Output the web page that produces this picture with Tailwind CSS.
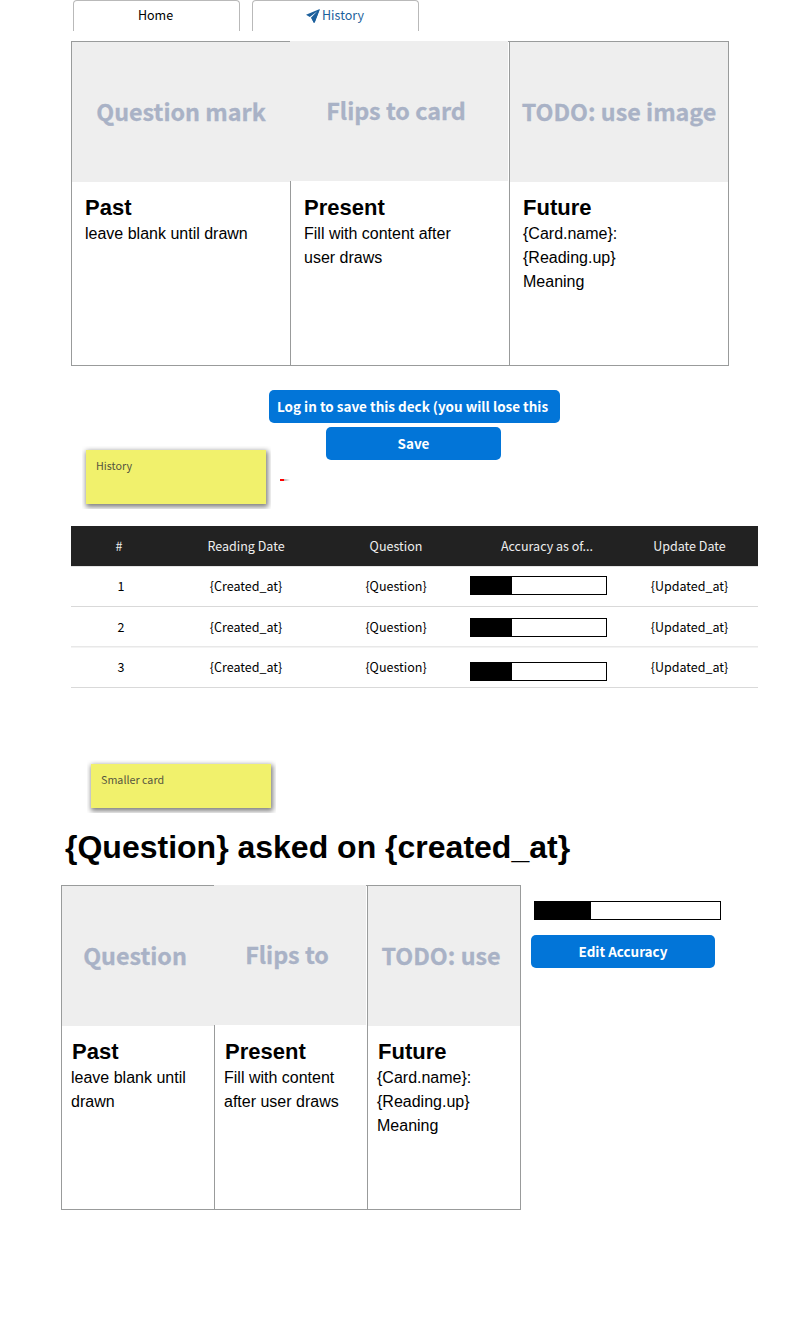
<!DOCTYPE html>
<html lang="en">
<head>
<meta charset="utf-8">
<title>Reading history</title>
<script src="https://cdn.jsdelivr.net/npm/@tailwindcss/browser@4"></script>
</head>
<body class="w-[809px] h-[1319px] overflow-hidden bg-white text-black font-['Noto_Sans_CJK_SC',sans-serif] whitespace-nowrap">
<main class="flex flex-col h-full">

  <!-- Tabs -->
  <nav class="flex gap-3 ml-[73px] h-[31px] text-[12.53px]">
    <div class="w-[167px] h-[31px] border border-b-0 border-[#b9b9b9] rounded-t-[4px] text-center"><div class="h-full -ml-[2px] leading-[28px]">Home</div></div>
    <div class="w-[167px] h-[31px] border border-b-0 border-[#b9b9b9] rounded-t-[4px] flex justify-center items-start gap-[2px] pr-px text-[#1c5f9c] leading-[28px]">
      <svg class="mt-2 w-[14px] h-[14px]" viewBox="0 0 14 14" fill="currentColor"><path d="M13.8 0 0 5.8 3.8 7.9 11.4 2.3 4.9 8.8 7.8 13.6 8.6 13.3Z"/><path d="M14 0 8.7 13.8 7.4 13.6 6 9.4Z"/></svg>
      <span>History</span>
    </div>
  </nav>

  <!-- Three-card spread -->
  <section class="flex mt-[10px] ml-[71px] h-[325px] font-['Liberation_Sans',sans-serif] text-base leading-6">
    <article class="w-[219px] border border-r-0 border-[#999b9b]">
      <div class="h-[140px] bg-[#eee] flex items-center justify-center pb-[2px] font-['Noto_Sans_CJK_SC',sans-serif] font-bold text-[23.3px] text-[#a9b2c6] [-webkit-text-stroke:0.3px]">Question mark</div>
      <h2 class="mt-[13px] ml-[13px] text-[22px] leading-[26px] font-bold">Past</h2>
      <p class="mt-px ml-[13px]">leave blank until drawn</p>
    </article>
    <article class="w-[219px] flex flex-col">
      <div class="flex h-[140px]">
        <div class="w-[218px] bg-[#eee] flex items-center justify-center pr-[6px] pb-[2px] font-['Noto_Sans_CJK_SC',sans-serif] font-bold text-[23.3px] text-[#a9b2c6] [-webkit-text-stroke:0.3px]">Flips to card</div>
        <div class="w-px border-t border-[#999b9b]"></div>
      </div>
      <div class="grow border-l border-b border-[#999b9b] pt-[14px] pl-[13px]">
        <h2 class="text-[22px] leading-[26px] font-bold">Present</h2>
        <p class="mt-px">Fill with content after<br>user draws</p>
      </div>
    </article>
    <article class="w-[220px] border border-[#999b9b]">
      <div class="h-[140px] bg-[#eee] flex items-center justify-center pb-[2px] font-['Noto_Sans_CJK_SC',sans-serif] font-bold text-[23.3px] text-[#a9b2c6] [-webkit-text-stroke:0.3px]">TODO: use image</div>
      <h2 class="mt-[13px] ml-[13px] text-[22px] leading-[26px] font-bold">Future</h2>
      <p class="mt-px ml-[13px]">{Card.name}:<br>{Reading.up}<br>Meaning</p>
    </article>
  </section>

  <!-- Note beside the save buttons -->
  <section class="flex mt-6 h-[119px] ml-[82px]">
    <div class="mt-[56px] w-[189px] h-[63px] overflow-hidden pt-[4px] pl-[4px]">
      <div class="w-[180px] h-[54px] bg-[#f1f16c] shadow-[1px_2px_5px_1px_rgba(0,0,0,0.5)] pl-[10px] pt-[8px] text-[10.74px] leading-4 text-[#555540]">History</div>
    </div>
    <div class="mt-[89px] ml-[9px] w-[10px] h-[2px] bg-linear-to-r from-[#f00] from-40% via-[#bbb] via-45% to-white"></div>
    <div class="-ml-[21px] w-[291px] flex flex-col items-center gap-1 text-white text-[13.47px] leading-[33px] font-bold">
      <div class="w-[291px] h-[33px] rounded-[5px] bg-[#0275d8] pl-2">Log in to save this deck (you will lose this</div>
      <div class="w-[175px] h-[33px] rounded-[5px] bg-[#0275d8] text-center -ml-[2px]">Save</div>
    </div>
  </section>

  <!-- History table -->
  <section class="mt-[17px] ml-[71px] w-[687px] text-[12.53px] text-center">
    <div class="grid grid-cols-[98px_154px_146px_156px_129px] h-[40px] leading-[40px] bg-[#222] text-[#eee]">
      <div class="pr-[2px]">#</div><div>Reading Date</div><div>Question</div><div>Accuracy as of...</div><div>Update Date</div>
    </div>
    <div class="grid grid-cols-[98px_154px_146px_156px_129px] h-[41px] leading-[40px] border-y border-t-[#e4e4e4] border-b-[#d9d9d9]">
      <div class="-mt-px pl-[2px]">1</div><div class="-mt-px">{Created_at}</div><div class="-mt-px">{Question}</div>
      <div class="mt-[9px] ml-px w-[137px] h-[19px] border border-black"><div class="w-[41px] h-full bg-black"></div></div>
      <div class="-mt-px">{Updated_at}</div>
    </div>
    <div class="grid grid-cols-[98px_154px_146px_156px_129px] h-[40px] leading-[40px] border-b border-[#e8e8e8]">
      <div class="pl-[2px]">2</div><div>{Created_at}</div><div>{Question}</div>
      <div class="mt-[11px] ml-px w-[137px] h-[19px] border border-black"><div class="w-[41px] h-full bg-black"></div></div>
      <div>{Updated_at}</div>
    </div>
    <div class="grid grid-cols-[98px_154px_146px_156px_129px] h-[41px] leading-[40px] border-y border-t-[#f3f3f3] border-b-[#d9d9d9]">
      <div class="-mt-px pl-[2px]">3</div><div class="-mt-px">{Created_at}</div><div class="-mt-px">{Question}</div>
      <div class="mt-[14px] ml-px w-[137px] h-[19px] border border-black"><div class="w-[41px] h-full bg-black"></div></div>
      <div class="-mt-px">{Updated_at}</div>
    </div>
  </section>

  <!-- Second note -->
  <div class="mt-[72px] ml-[87px] w-[189px] h-[53px] overflow-hidden pt-[4px] pl-[4px]">
    <div class="w-[180px] h-[44px] bg-[#f1f16c] shadow-[1px_2px_5px_1px_rgba(0,0,0,0.5)] pl-[10px] pt-[8px] text-[10.74px] leading-4 text-[#555540]">Smaller card</div>
  </div>

  <h1 class="mt-[14px] ml-[65px] h-[40px] text-[32px] leading-[40px] font-bold font-['Liberation_Sans',sans-serif]">{Question} asked on {created_at}</h1>

  <!-- Smaller spread -->
  <div class="flex mt-[18px] ml-[61px]">
    <section class="flex h-[325px] font-['Liberation_Sans',sans-serif] text-base leading-6">
      <article class="w-[153px] border border-r-0 border-[#999b9b]">
        <div class="h-[140px] bg-[#eee] flex items-center justify-center pr-[6px] pb-[2px] font-['Noto_Sans_CJK_SC',sans-serif] font-bold text-[23.3px] text-[#a9b2c6] [-webkit-text-stroke:0.3px]">Question</div>
        <h2 class="mt-[13px] ml-[10px] text-[22px] leading-[26px] font-bold">Past</h2>
        <p class="mt-px ml-[9px]">leave blank until<br>drawn</p>
      </article>
      <article class="w-[153px] flex flex-col">
        <div class="flex h-[140px]">
          <div class="w-[152px] bg-[#eee] flex items-center justify-center pr-[6px] pb-[2px] font-['Noto_Sans_CJK_SC',sans-serif] font-bold text-[23.3px] text-[#a9b2c6] [-webkit-text-stroke:0.3px]">Flips to</div>
          <div class="w-px border-t border-[#999b9b]"></div>
        </div>
        <div class="grow border-l border-b border-[#999b9b] pt-[14px] pl-[9px]">
          <h2 class="ml-px text-[22px] leading-[26px] font-bold">Present</h2>
          <p class="mt-px">Fill with content<br>after user draws</p>
        </div>
      </article>
      <article class="w-[154px] border border-[#999b9b]">
        <div class="h-[140px] bg-[#eee] flex items-center justify-center pr-[6px] pb-[2px] font-['Noto_Sans_CJK_SC',sans-serif] font-bold text-[23.3px] text-[#a9b2c6] [-webkit-text-stroke:0.3px]">TODO: use</div>
        <h2 class="mt-[13px] ml-[10px] text-[22px] leading-[26px] font-bold">Future</h2>
        <p class="mt-px ml-[9px]">{Card.name}:<br>{Reading.up}<br>Meaning</p>
      </article>
    </section>
    <aside class="ml-[10px] pt-4">
      <div class="ml-[3px] w-[187px] h-[19px] border border-black"><div class="w-[56px] h-full bg-black"></div></div>
      <div class="mt-[15px] w-[184px] h-[33px] rounded-[5px] bg-[#0275d8] text-center text-white text-[13.47px] leading-[33px] font-bold">Edit Accuracy</div>
    </aside>
  </div>
</main>
</body>
</html>
